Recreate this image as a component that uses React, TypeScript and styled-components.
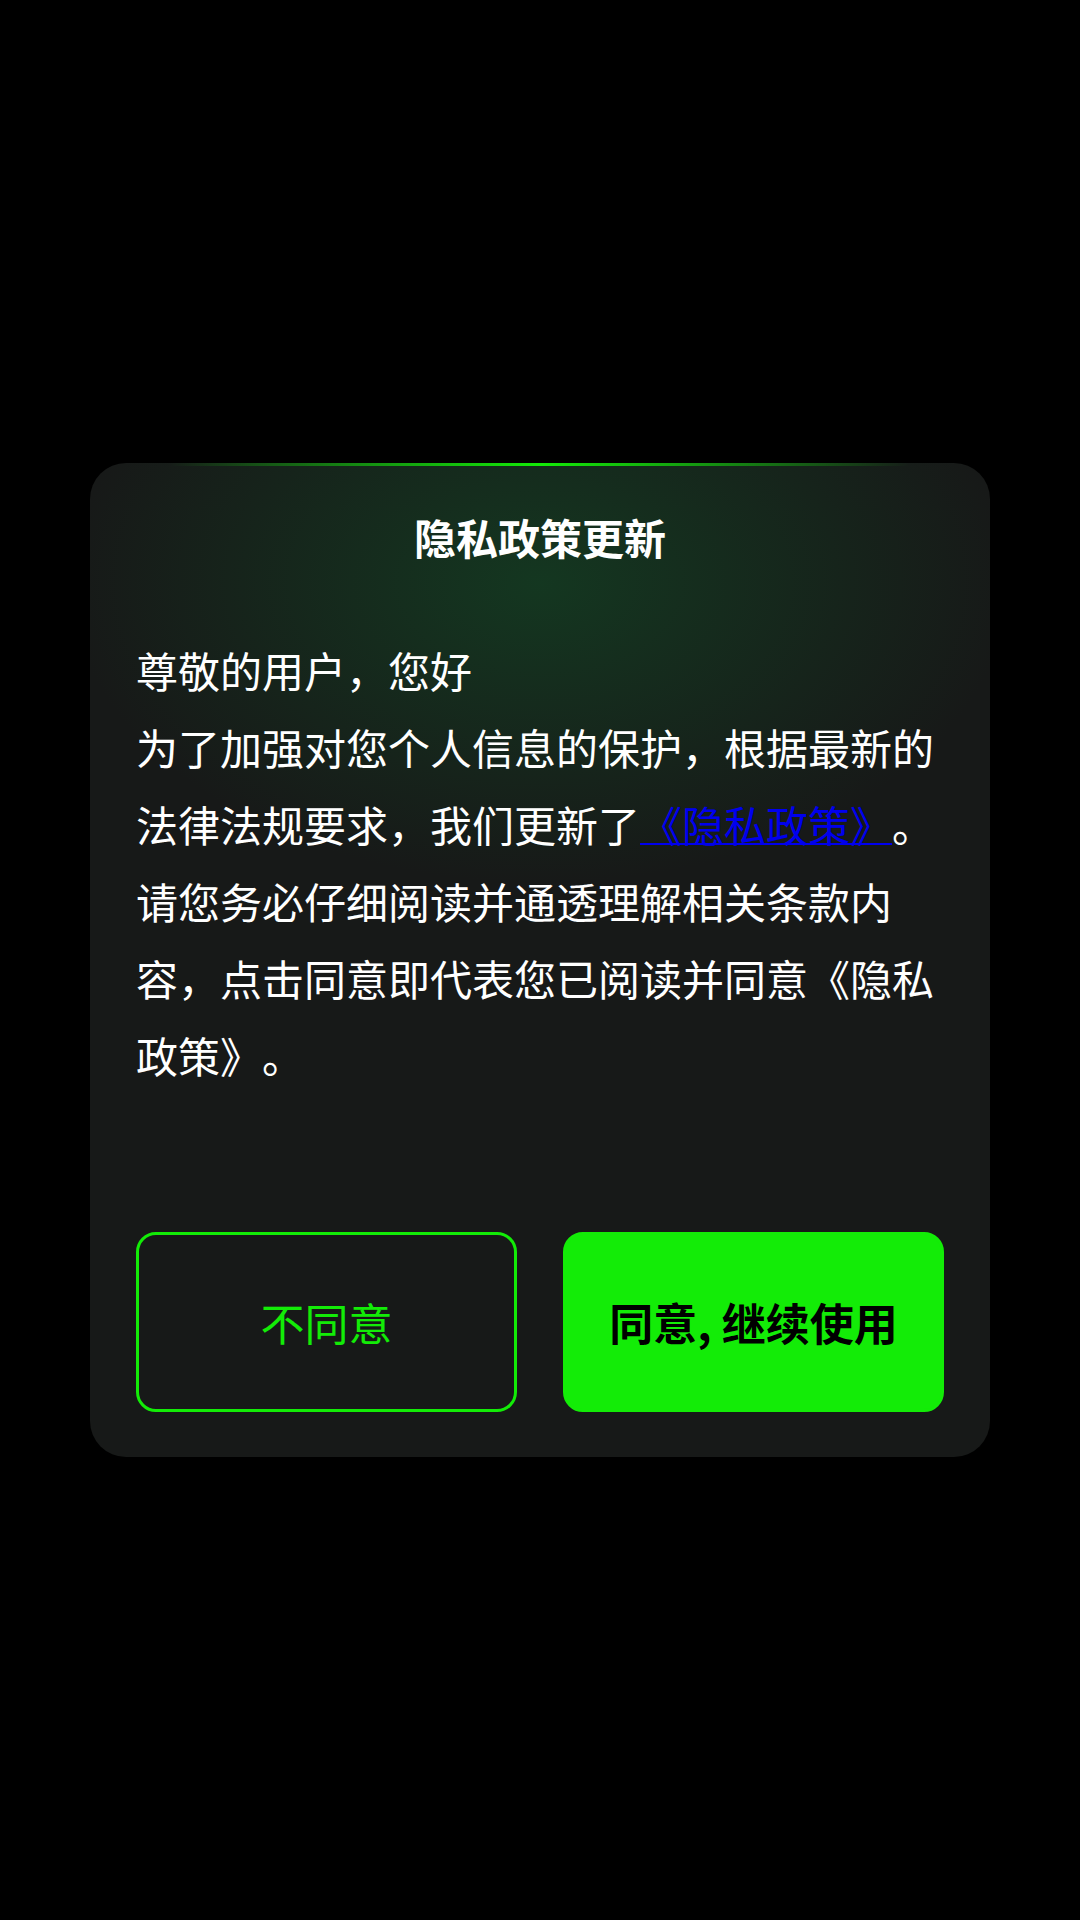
import styled, { createGlobalStyle } from "styled-components";

const GlobalStyle = createGlobalStyle`
    html, body {
        margin: 0;
        padding: 0;
        background: #000;
    }
    body {
        font-family: "Noto Sans CJK SC", "Noto Sans", sans-serif;
        text-spacing-trim: space-all;
    }
`

const Overlay = styled.div`
    width: 1080px;
    height: 1920px;
    background: #000;
    display: flex;
    align-items: center;
    justify-content: center;
`
const Dialog = styled.div`
    position: relative;
    width: 900px;
    box-sizing: border-box;
    padding: 46px 46px 45px;
    border-radius: 36px;
    background:
        radial-gradient(ellipse 470px 300px at 50% 120px, rgba(18, 75, 38, 0.6), rgba(18, 75, 38, 0) 100%),
        #171918;
    overflow: hidden;
    &::before {
        content: "";
        position: absolute;
        top: 0;
        left: 80px;
        right: 80px;
        height: 3px;
        background: linear-gradient(90deg, rgba(19, 236, 7, 0), #13ec07 50%, rgba(19, 236, 7, 0));
    }
`
const Title = styled.h2`
    margin: 0;
    text-align: center;
    color: #fff;
    font-size: 42px;
    font-weight: 700;
    line-height: 56px;
`
const Body = styled.div`
    margin-top: 66px;
    color: #fff;
    font-size: 42px;
    line-height: 77px;
    text-spacing-trim: space-all;
    & p { margin: 0; }
`
const PolicyLink = styled.a`
    color: #0000ee;
    text-decoration: underline;
    text-decoration-thickness: 2px;
`
const Actions = styled.div`
    margin-top: 139px;
    display: grid;
    grid-template-columns: 1fr 1fr;
    gap: 46px;
`
const ActionButton = styled.button<{ $primary?: boolean }>`
    height: 180px;
    box-sizing: border-box;
    border-radius: 20px;
    border: 3px solid #13ec07;
    background: ${p => p.$primary ? "#13ec07" : "transparent"};
    color: ${p => p.$primary ? "#000" : "#13ec07"};
    font-family: "Noto Sans CJK SC", "Noto Sans", sans-serif;
    font-size: 44px;
    font-weight: ${p => p.$primary ? 700 : 400};
    cursor: pointer;
`

function App() {
    return (
        <Overlay>
            <GlobalStyle />
            <Dialog>
                <Title>隐私政策更新</Title>
                <Body>
                    <p>尊敬的用户，您好</p>
                    <p>
                        为了加强对您个人信息的保护，根据最新的法律法规要求，我们更新了<PolicyLink href="#">《隐私政策》</PolicyLink>。请您务必仔细阅读并通透理解相关条款内容，点击同意即代表您已阅读并同意《隐私政策》。
                    </p>
                </Body>
                <Actions>
                    <ActionButton>不同意</ActionButton>
                    <ActionButton $primary>同意, 继续使用</ActionButton>
                </Actions>
            </Dialog>
        </Overlay>
    );
}

export default App;
